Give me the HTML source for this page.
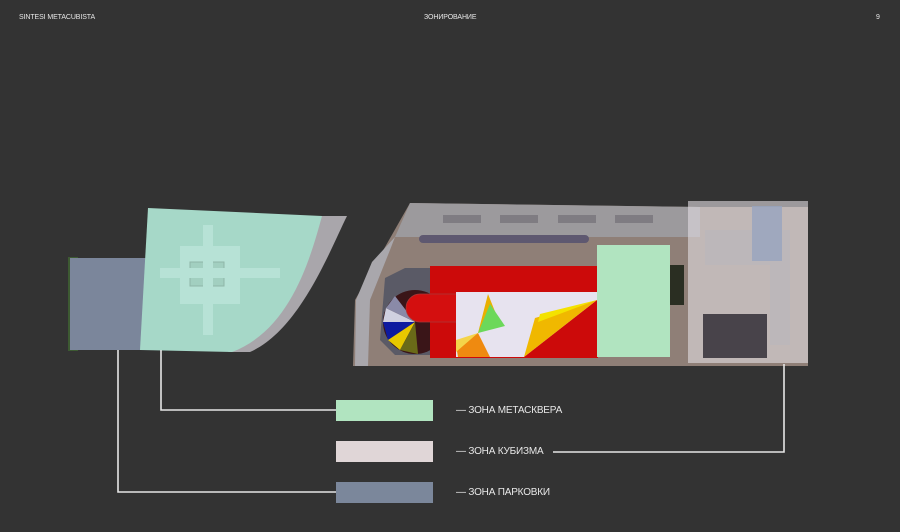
<!DOCTYPE html>
<html><head><meta charset="utf-8"><style>
html,body{margin:0;padding:0;background:#333333;}
body{width:900px;height:532px;overflow:hidden;position:relative;font-family:"Liberation Sans",sans-serif;}
.h{position:absolute;top:14px;color:#e6e6e6;font-size:7px;letter-spacing:-0.1px;}
.t{position:absolute;left:456px;color:#e8e8e8;font-size:10px;letter-spacing:-0.2px;}
</style></head><body>
<div class="h" style="left:19px">SINTESI METACUBISTA</div>
<div class="h" style="left:424px">ЗОНИРОВАНИЕ</div>
<div class="h" style="left:876px">9</div>
<svg width="900" height="532" style="position:absolute;left:0;top:0">
<path d="M320,216 L347,216 C330,250 300,330 250,352 L228,352 C280,320 310,250 320,216Z" fill="#a9a6ab"/>
<rect x="68" y="257" width="10" height="94" fill="#3d5a32"/>
<rect x="70" y="258" width="82" height="92" fill="#7b869b"/>
<path d="M148,208 L322,216 C310,260 290,330 232,352 L140,350 Z" fill="#a6d8c8"/>
<rect x="180" y="246" width="60" height="58" fill="#b7e2d6"/>
<rect x="190" y="262" width="34" height="24" fill="#a2cfc0" stroke="#8fb5a8" stroke-width="1"/>
<rect x="160" y="268" width="120" height="10" fill="#b7e2d6"/>
<rect x="203" y="225" width="10" height="110" fill="#b7e2d6"/>
<path d="M410,203 L700,207 L808,207 L808,366 L353,366 L355,300 Z" fill="#8f7f77"/>
<path d="M410,203 L700,207 L700,237 L395,237 Z" fill="#9c9a9d"/>
<path d="M395,237 L372,262 L356,300 L355,366 L368,366 L370,300 L390,250 Z" fill="#a9a7ac"/>
<rect x="443" y="215" width="38" height="8" fill="#7f7c82"/><rect x="500" y="215" width="38" height="8" fill="#7f7c82"/><rect x="558" y="215" width="38" height="8" fill="#7f7c82"/><rect x="615" y="215" width="38" height="8" fill="#7f7c82"/>
<rect x="419" y="235" width="170" height="8" rx="4" fill="#5e5870"/>
<path d="M385,278 L405,268 L430,268 L430,355 L395,355 L380,340 Z" fill="#5a5a66"/>
<circle cx="415" cy="322" r="32" fill="#3a1518"/>
<path d="M415,322 L383,322 L386,308 Z" fill="#d0d0e0"/>
<path d="M415,322 L386,308 L395,296 Z" fill="#8a8aa8"/>
<path d="M415,322 L383,322 L388,340 Z" fill="#0d1aa0"/>
<path d="M415,322 L388,340 L400,350 Z" fill="#e8c800"/>
<path d="M415,322 L400,350 L418,354 Z" fill="#6a6a18"/>
<rect x="430" y="266" width="168" height="92" fill="#cc0a0a"/>
<path d="M420,294 L460,294 L460,322 L420,322 A14,14 0 0 1 420,294Z" fill="#d40f0f" stroke="#aa3a3a" stroke-width="0.7"/>
<rect x="456" y="292" width="141" height="65" fill="#e7e3ef"/>
<path d="M597,300 L597,357 L524,357 Z" fill="#cc0a0a"/>
<path d="M597,300 L535,318 L524,357 Z" fill="#f0b800"/>
<path d="M597,300 L540,314 L538,322 Z" fill="#f4e200"/>
<path d="M488,294 L500,324 L478,333 Z" fill="#e9b000"/>
<path d="M490,304 L505,326 L478,333 Z" fill="#6cd85a"/>
<path d="M478,333 L456,345 L458,357 L490,357 Z" fill="#ef8a10"/>
<path d="M478,333 L456,340 L456,352 Z" fill="#f4d44a"/>
<rect x="597" y="245" width="73" height="112" fill="#b1e4c0"/>
<rect x="670" y="265" width="14" height="40" fill="#2a2e22"/>
<rect x="688" y="201" width="120" height="162" fill="#e2dee3" opacity="0.6"/>
<path d="M705,230 H790 V345 H770 V265 H705Z" fill="#b9b6bd" opacity="0.6"/>
<rect x="752" y="206" width="30" height="55" fill="#97a4bf" opacity="0.8"/>
<rect x="703" y="314" width="64" height="44" fill="#48434a"/>
<g stroke="#e6e6e6" stroke-width="1.6" fill="none">
<path d="M118,350 V492 H336"/>
<path d="M161,350 V410 H336"/>
<path d="M784,364 V452 H553"/>
</g>
<rect x="336" y="400" width="97" height="21" fill="#b1e4c0"/>
<rect x="336" y="441" width="97" height="21" fill="#e0d6d7"/>
<rect x="336" y="482" width="97" height="21" fill="#7b879b"/>
</svg>
<div class="t" style="top:405px">— ЗОНА МЕТАСКВЕРА</div>
<div class="t" style="top:446px">— ЗОНА КУБИЗМА</div>
<div class="t" style="top:487px">— ЗОНА ПАРКОВКИ</div>
</body></html>
